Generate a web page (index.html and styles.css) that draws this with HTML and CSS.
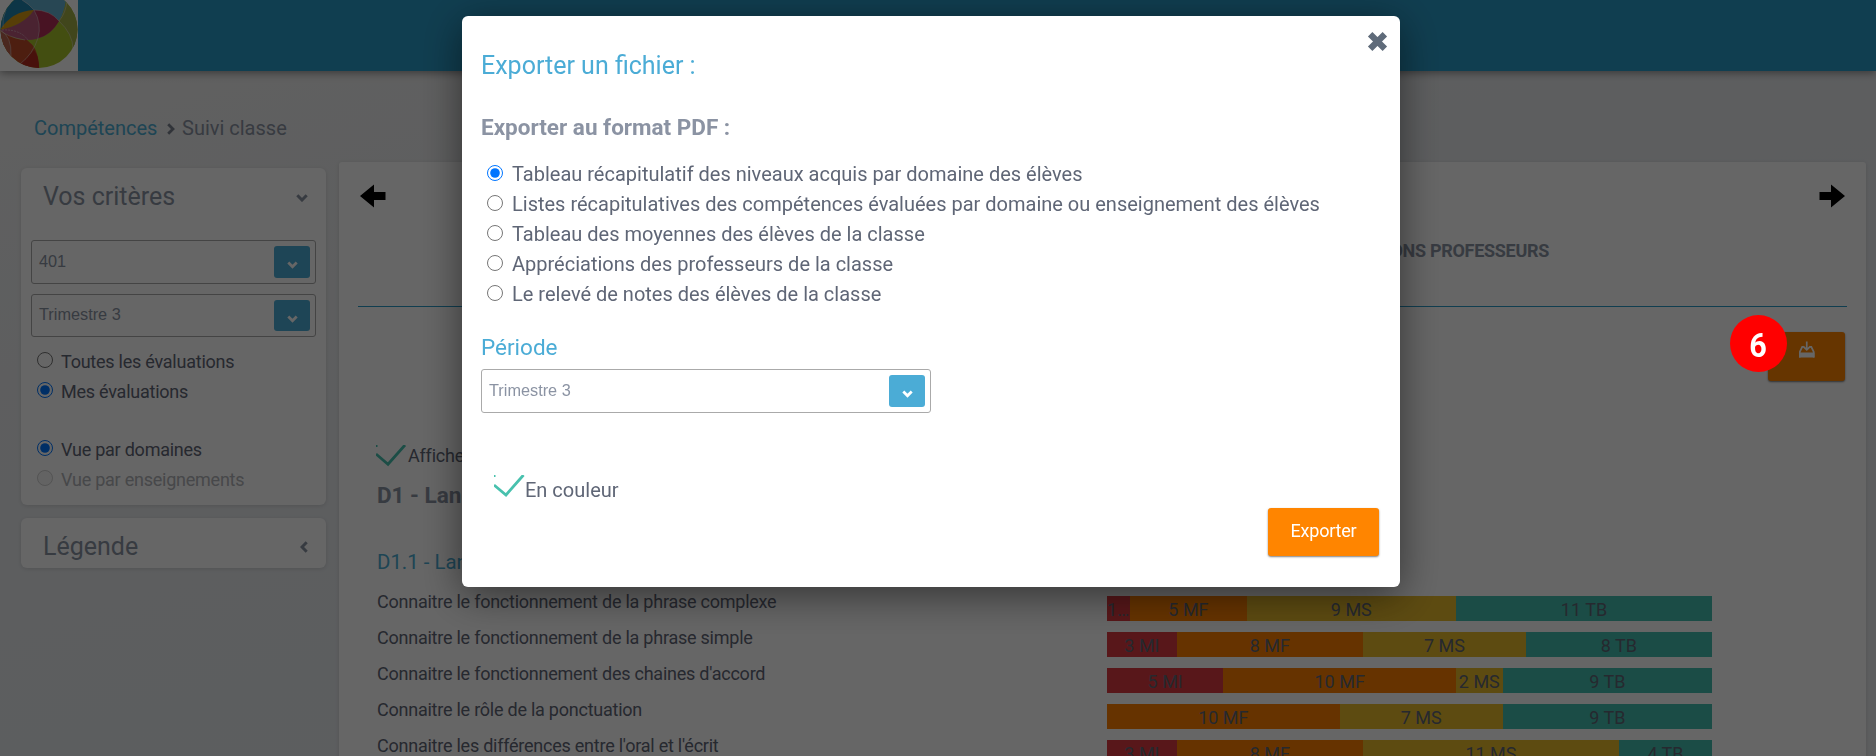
FILE: index.html
```html
<!DOCTYPE html>
<html lang="fr">
<head>
<meta charset="utf-8">
<title>Compétences - Suivi classe</title>
<link rel="stylesheet" href="styles.css">
</head>
<body>
<div class="page">
  <header class="topbar">
    <svg class="logo" viewBox="0 0 78 71" width="78" height="71">
      <defs><clipPath id="ball"><circle cx="39" cy="29.500" r="38.500"/></clipPath></defs>
      <rect width="78" height="71" fill="#fff"/>
      <g clip-path="url(#ball)">
        <rect y="-10" width="78" height="81" fill="#a9c22c"/>
        <path d="M0 31V-10H30L34 10Q14 16 0 31Z" fill="#2286ae"/>
        <path d="M25-10H67Q66 10 59 21Q48 11 34 10Q28 4 22 0Z" fill="#65b1d3"/>
        <path d="M67-5Q66 10 59 21Q73 34 73 49L80 40V0Z" fill="#a3b046"/>
        <path d="M0 30Q12 11 34 10Q26 24 0 30Z" fill="#d99b16"/>
        <path d="M34 10Q50 10 59 21Q48 41 25 40Q7 37 0 30Q24 25 34 10Z" fill="#b9577c"/>
        <path d="M34 10Q50 10 59 21Q51 35 38 38Q42 24 34 10Z" fill="#b53058"/>
        <path d="M0 30Q13 40 27 40Q41 50 38 71H0Z" fill="#c04b28"/>
        <path d="M34 50Q28 58 20 64L28 72H39Q40 58 34 50Z" fill="#b52c20"/>
        <path d="M0 30Q12 36 11 56L0 50Z" fill="#b96550"/>
        <g fill="none" stroke="#e4d9dc" stroke-opacity=".6" stroke-width=".8">
          <path d="M34 10Q50 10 59 21M25 40Q7 37 0 30"/>
          <path d="M34 10Q42 24 38 38Q33 54 20 64M59 21Q73 34 73 49M67 0Q66 13 59 21M0 30Q12 36 11 56M3 27Q2 18 6 10M22 0Q28 3 34 10"/>
          <path d="M2 30Q20 29 28 40" stroke-dasharray="2 1"/>
        </g>
      </g>
    </svg>
  </header>

  <nav class="crumbs">
    <a class="crumb-link">Compétences</a>
    <svg class="crumb-sep" width="8" height="12" viewBox="0 0 8 12"><path d="M1.200 1.200 6 6 1.200 10.800"/></svg>
    <span class="crumb-here">Suivi classe</span>
  </nav>

  <div class="columns">
    <aside class="side">
      <section class="panel criteria">
        <div class="panel-head">
          <h2>Vos critères</h2>
          <svg class="chev" width="12" height="8" viewBox="0 0 12 8"><path d="M1.300 1.300 6 6 10.700 1.300"/></svg>
        </div>
        <div class="select first"><span>401</span><i class="drop"><svg width="11" height="8" viewBox="0 0 11 8"><path d="M1.300 1.500 5.500 5.700 9.700 1.500"/></svg></i></div>
        <div class="select second"><span>Trimestre 3</span><i class="drop"><svg width="11" height="8" viewBox="0 0 11 8"><path d="M1.300 1.500 5.500 5.700 9.700 1.500"/></svg></i></div>
        <div class="radios small">
          <label><input type="radio" name="eval"><span>Toutes les évaluations</span></label>
          <label><input type="radio" name="eval" checked><span>Mes évaluations</span></label>
        </div>
        <div class="radios small views">
          <label><input type="radio" name="vue" checked><span>Vue par domaines</span></label>
          <label class="off"><input type="radio" name="vue" disabled><span>Vue par enseignements</span></label>
        </div>
      </section>
      <section class="panel legend">
        <div class="panel-head">
          <h2>Légende</h2>
          <svg class="chev" width="8" height="12" viewBox="0 0 8 12"><path d="M6.700 1.300 2 6 6.700 10.700"/></svg>
        </div>
      </section>
    </aside>

    <main class="content">
      <div class="pager">
        <svg width="26" height="24" viewBox="0 0 26 24"><path d="M0 12 14 .5V8H25.500V16H14V23.500Z"/></svg>
        <svg width="26" height="24" viewBox="0 0 26 24"><path d="M26 12 12 .5V8H.5V16H12V23.500Z"/></svg>
      </div>
      <div class="tabs"><span class="tab">APPRÉCIATIONS PROFESSEURS</span></div>
      <div class="toolbar">
        <button class="btn download">
          <svg width="16" height="17" viewBox="0 0 16 17"><path d="M.8 16.500V10.800L3.200 5.800H4.500M14.700 16.500V10.800L12.300 5.800H11" fill="none" stroke="#fff" stroke-width="1.700"/><path d="M0 11.500H15.500V16.500H0Z" fill="#fff"/><path d="M7.750.5V9M4.200 5.300 7.750 8.900 11.300 5.300" fill="none" stroke="#fff" stroke-width="1.700"/></svg>
        </button>
        <span class="step"><span class="step-num">6</span></span>
      </div>
      <div class="check"><svg width="32" height="22" viewBox="0 0 32 22"><path d="M0 9 12 19.300 29 0M0 .5H1.500"/></svg><span>Afficher</span></div>
      <h3 class="domain">D1 - Langages</h3>
      <h4 class="sub">D1.1 - Langue française</h4>
      <div class="rows">
        <div class="row"><span class="skill">Connaitre le fonctionnement de la phrase complexe</span>
          <div class="bar"><b class="mi" style="flex-grow:1">1 MI</b><b class="mf" style="flex-grow:5">5 MF</b><b class="ms" style="flex-grow:9">9 MS</b><b class="tb" style="flex-grow:11">11 TB</b></div></div>
        <div class="row"><span class="skill">Connaitre le fonctionnement de la phrase simple</span>
          <div class="bar"><b class="mi" style="flex-grow:3">3 MI</b><b class="mf" style="flex-grow:8">8 MF</b><b class="ms" style="flex-grow:7">7 MS</b><b class="tb" style="flex-grow:8">8 TB</b></div></div>
        <div class="row"><span class="skill">Connaitre le fonctionnement des chaines d'accord</span>
          <div class="bar"><b class="mi" style="flex-grow:5">5 MI</b><b class="mf" style="flex-grow:10">10 MF</b><b class="ms" style="flex-grow:2">2 MS</b><b class="tb" style="flex-grow:9">9 TB</b></div></div>
        <div class="row"><span class="skill">Connaitre le rôle de la ponctuation</span>
          <div class="bar"><b class="mf" style="flex-grow:10">10 MF</b><b class="ms" style="flex-grow:7">7 MS</b><b class="tb" style="flex-grow:9">9 TB</b></div></div>
        <div class="row"><span class="skill">Connaitre les différences entre l'oral et l'écrit</span>
          <div class="bar"><b class="mi" style="flex-grow:3">3 MI</b><b class="mf" style="flex-grow:8">8 MF</b><b class="ms" style="flex-grow:11">11 MS</b><b class="tb" style="flex-grow:4">4 TB</b></div></div>
      </div>
    </main>
  </div>
</div>

<div class="overlay">
  <div class="modal">
    <svg class="close" width="21" height="21" viewBox="0 0 20 20"><path d="M3 3 17 17M17 3 3 17"/></svg>
    <h1>Exporter un fichier :</h1>
    <h3 class="format">Exporter au format PDF :</h3>
    <div class="radios">
      <label><input type="radio" name="pdf" checked><span>Tableau récapitulatif des niveaux acquis par domaine des élèves</span></label>
      <label><input type="radio" name="pdf"><span>Listes récapitulatives des compétences évaluées par domaine ou enseignement des élèves</span></label>
      <label><input type="radio" name="pdf"><span>Tableau des moyennes des élèves de la classe</span></label>
      <label><input type="radio" name="pdf"><span>Appréciations des professeurs de la classe</span></label>
      <label><input type="radio" name="pdf"><span>Le relevé de notes des élèves de la classe</span></label>
    </div>
    <h2 class="period">Période</h2>
    <div class="select wide"><span>Trimestre 3</span><i class="drop"><svg width="11" height="8" viewBox="0 0 11 8"><path d="M1.300 1.500 5.500 5.700 9.700 1.500"/></svg></i></div>
    <div class="check color"><svg width="31" height="22" viewBox="0 0 31 22"><path d="M0 10 12 20 29.500 0M0 .5H1.500"/></svg><span>En couleur</span></div>
    <div class="actions"><button class="btn export">Exporter</button></div>
  </div>
</div>
</body>
</html>
```

FILE: styles.css
```css
* { box-sizing: border-box; }
html, body { height: 100%; }
body {
  margin: 0;
  overflow: hidden;
  font-family: Roboto, "Liberation Sans", sans-serif;
  font-size: 18px;
  color: #5f6676;
}
h1, h2, h3, h4 { margin: 0; font-weight: 400; }

.page {
  height: 756px;
  overflow: hidden;
  background: linear-gradient(165deg, #f2f1f0 0%, #eaecee 30%, #e7eaee 60%, #e9ebee 100%);
}

.topbar {
  position: relative;
  height: 71px;
  background: #2a9bc8;
  box-shadow: 0 2px 8px rgba(0, 0, 0, .4);
}
.logo { display: block; }

.crumbs {
  display: flex;
  align-items: center;
  height: 30px;
  margin-top: 42px;
  padding-left: 34px;
  font-size: 20px;
  line-height: 30px;
}
.crumb-link { width: 133px; color: #4bacd3; }
.crumb-sep { margin: 2px 7px 0 0; }
.crumb-sep path, .chev path, .drop path { fill: none; stroke: #7b8290; stroke-width: 2.800; }
.crumb-here { color: #8b93a3; }

.columns { display: flex; align-items: flex-start; margin-top: 19px; }

.side { width: 305px; margin: 6px 13px 0 21px; }
.panel {
  background: #fff;
  border-radius: 6px;
  box-shadow: 0 1px 4px rgba(0, 0, 0, .12);
}
.criteria { height: 337px; padding: 0 10px; }
.legend { height: 50px; margin-top: 13px; padding: 0 10px; }
.panel-head {
  display: flex;
  align-items: center;
  justify-content: space-between;
  height: 59px;
  padding: 0 8px 0 12px;
}
.legend .panel-head { height: 57px; }
.panel-head h2 { margin-top: -2px; font-size: 25px; line-height: 32px; color: #8b93a3; }
.legend .panel-head h2 { margin-top: 0; }
.chev path { stroke: #8b93a3; stroke-width: 3; }

.select {
  display: flex;
  align-items: flex-start;
  justify-content: space-between;
  height: 44px;
  margin-top: 13px;
  padding: 5px 5px 5px 7px;
  border: 1px solid #aaa;
  border-radius: 3px;
  background: #fff;
  color: #8b93a3;
  font-family: "Liberation Sans", Arial, sans-serif;
  font-size: 16.300px;
  line-height: 30px;
}
.select.second { height: 43px; margin-top: 10px; line-height: 28px; }
.drop {
  display: flex;
  align-items: center;
  justify-content: center;
  width: 36px;
  height: 100%;
  padding-top: 6px;
  border-radius: 3px;
  background: #4bacd6;
}
.drop path { stroke: #fff; }

.radios label { display: flex; align-items: center; height: 30px; }
.radios input { width: 16px; height: 16px; margin: 0 9px 3px 6px; }
.radios span { font-size: 20px; line-height: 30px; }
.radios.small { margin-top: 10px; }
.radios.small input { margin: 0 8px 4px 6px; }
.radios.small span { font-size: 18px; letter-spacing: -.24px; }
.radios.views { margin-top: 28px; }
.off span { color: #b1b3b8; }

.content {
  width: 1527px;
  height: 640px;
  padding: 0 19px;
  background: #fff;
  border-radius: 3px 3px 0 0;
  box-shadow: 0 1px 4px rgba(0, 0, 0, .12);
}
.pager { display: flex; justify-content: space-between; padding: 22px 2px 0; }
.pager svg { display: block; fill: #000; }
.tabs {
  display: flex;
  justify-content: flex-end;
  height: 99px;
  padding: 27px 298px 0 0;
  border-bottom: 1px solid #2a9bc8;
  font-size: 18px;
  letter-spacing: -.3px;
  font-weight: 700;
  line-height: 32px;
  color: #8b93a3;
}
.toolbar { position: relative; display: flex; justify-content: flex-end; height: 138px; padding: 25px 2px 0 0; }
.btn {
  border: 0;
  border-radius: 3px;
  background: #ff8500;
  box-shadow: 0 1px 2px rgba(0, 0, 0, .5);
  color: #fff;
  font-family: Roboto, sans-serif;
}
.download { width: 77px; height: 49px; padding: 0 0 12px; }
/* numbered marker drawn above the dimmed page */
.step {
  position: fixed;
  z-index: 3;
  left: 1730px;
  top: 315px;
  width: 57px;
  height: 57px;
  border-radius: 50%;
  background: #f00;
  color: #fff;
  font-size: 34px;
  font-weight: 700;
  line-height: 61px;
  text-align: center;
  font-family: Roboto, sans-serif;
}
.step-num { display: block; margin-left: -1px; transform: scaleX(.9); }
.check { display: flex; align-items: flex-start; padding-left: 18px; height: 32px; }
.check svg { flex: none; }
.check path { fill: none; stroke: #48c1ae; stroke-width: 2.800; }
.check span { line-height: 22px; letter-spacing: -.2px; }
.domain { padding-left: 19px; margin-top: 3px; font-size: 22.500px; font-weight: 700; line-height: 30px; color: #8b93a3; }
.sub { padding-left: 19px; margin-top: 37px; font-size: 20.400px; line-height: 30px; color: #4bacd3; }

.rows { margin-top: 13px; padding-left: 19px; }
.row { display: flex; height: 36px; }
.skill { width: 730px; font-size: 18px; line-height: 24px; letter-spacing: -.24px; }
.bar { display: flex; width: 605px; height: 25px; margin-top: 6px; }
.bar b {
  flex: 1 1 0;
  min-width: 0;
  overflow: hidden;
  font-weight: 400;
  line-height: 28px;
  text-align: center;
  text-overflow: ellipsis;
  white-space: nowrap;
}
.mi { background: #dc3b41; }
.mf { background: #ff8000; }
.ms { background: #e8bb2c; }
.tb { background: #45bfae; }

.overlay {
  position: fixed;
  z-index: 2;
  inset: 0;
  padding: 16px 0 0 462px;
  background: rgba(0, 0, 0, .6);
}
.modal {
  position: relative;
  width: 938px;
  height: 571px;
  padding: 34px 19px 0;
  border-radius: 6px;
  background: #fff;
  box-shadow: 0 8px 40px rgba(0, 0, 0, .5);
}
.close { position: absolute; top: 15px; right: 12px; }
.close path { stroke: #5f6b7a; stroke-width: 6; }
.modal h1 { font-size: 25px; line-height: 32px; color: #4bacd6; }
.format { margin-top: 30px; font-size: 22.500px; font-weight: 700; line-height: 30px; color: #8b93a3; }
.modal .radios { margin-top: 17px; }
.period { margin-top: 23px; font-size: 22.500px; line-height: 30px; color: #4bacd6; }
.select.wide { width: 450px; margin-top: 7px; }
.color { margin-top: 62px; padding-left: 13px; }
.color span { font-size: 20px; line-height: 30px; letter-spacing: 0; }
.actions { display: flex; justify-content: flex-end; margin: 1px 2px 0 0; }
.export { width: 111px; height: 48px; padding: 0 0 3px; font-size: 18px; letter-spacing: -.2px; }
```
